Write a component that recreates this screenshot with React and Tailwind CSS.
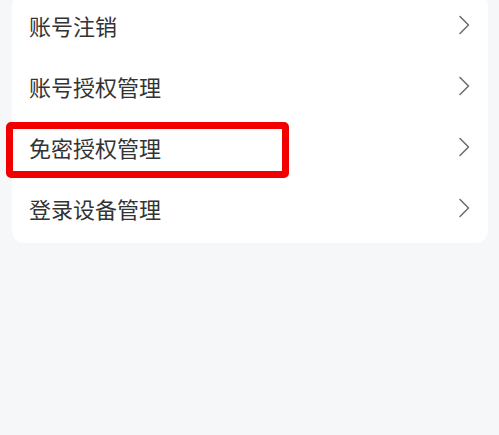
import React from "react";

const items = ["账号注销", "账号授权管理", "免密授权管理", "登录设备管理"];

function Chevron() {
	return (
		<svg width="12" height="20" viewBox="0 0 12 20" fill="none">
			<path d="M2 1.5 L10.5 10 L2 18.5" stroke="#6b6b6b" strokeWidth="1.5" strokeLinecap="round" strokeLinejoin="round" />
		</svg>
	);
}

export default function App() {
	return (
		<div
			className="relative w-[499px] h-[435px] overflow-hidden bg-[#f6f7f9]"
			style={{ fontFamily: '"Noto Sans CJK SC", "Noto Sans", sans-serif' }}
		>
			{/* 设置卡片 */}
			<div className="ml-[12px] mr-[11px] -mt-[6px] bg-white rounded-[12px] pb-[5px]">
				{items.map((label) => (
					<div key={label} className="h-[61px] flex items-center justify-between pl-[17px] pr-[18px]">
						<span className="text-[22px] leading-none font-normal text-[#333333]">{label}</span>
						<Chevron />
					</div>
				))}
			</div>

			{/* 红框标注 */}
			<div className="absolute left-[6px] top-[122px] w-[283px] h-[56px] border-[7px] border-[#f20000] rounded-[5px]" />
		</div>
	);
}
